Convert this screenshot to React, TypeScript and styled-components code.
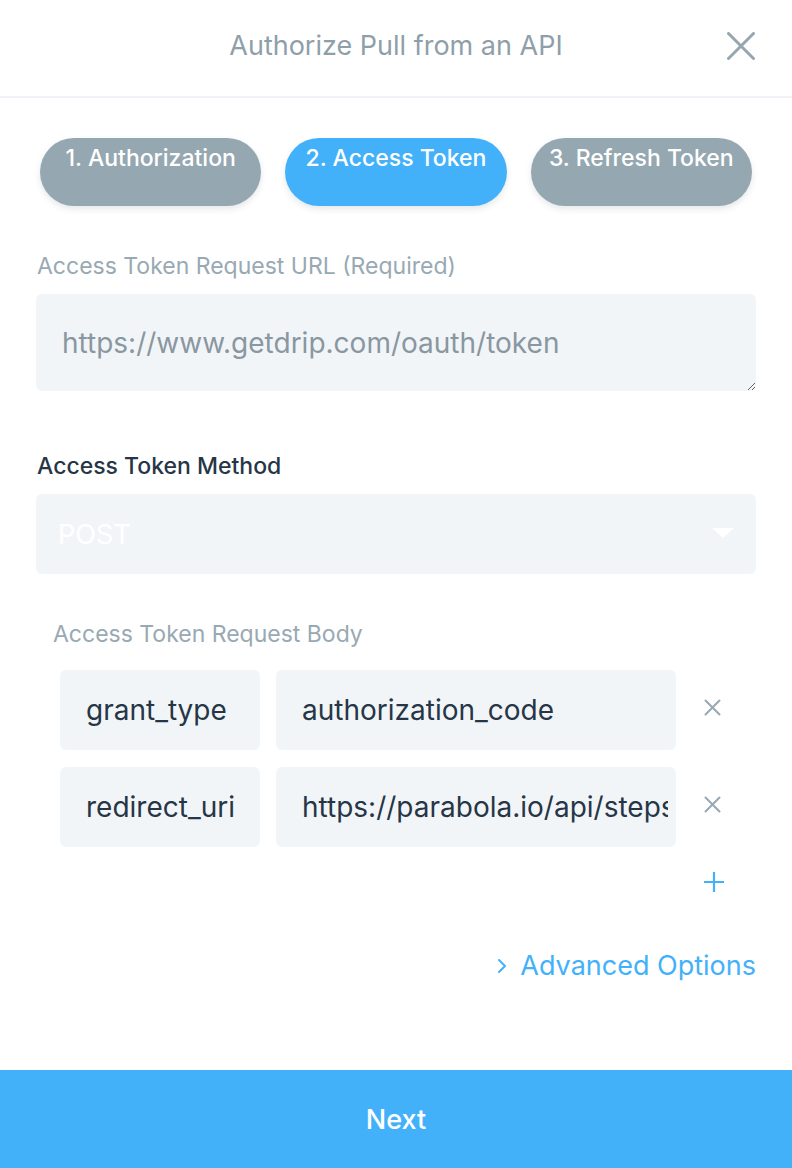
import React from "react";
import styled, { createGlobalStyle } from "styled-components";

const GlobalStyle = createGlobalStyle`
  html, body { margin: 0; padding: 0; background: #ffffff; }
  body { font-family: Inter, "Noto Sans", "Liberation Sans", sans-serif; }
  * { box-sizing: border-box; }
`;

const Page = styled.div`
  width: 792px;
  min-height: 100vh;
  display: flex;
  flex-direction: column;
  background: #fff;
`;

const Header = styled.header`
  height: 98px;
  display: grid;
  grid-template-columns: 1fr auto 1fr;
  align-items: center;
  border-bottom: 2px solid #eff3f7;
  padding: 0 36px 4px;
`;

const Title = styled.h1`
  grid-column: 2;
  margin: 0;
  font-size: 27px;
  line-height: 32px;
  font-weight: 400;
  color: #8e9faa;
`;

const CloseButton = styled.button`
  grid-column: 3;
  justify-self: end;
  border: none;
  background: none;
  padding: 0;
  width: 30px;
  height: 30px;
  display: flex;
  align-items: center;
  justify-content: center;
  cursor: pointer;
`;

const Body = styled.main`
  padding: 0 36px;
  display: flex;
  flex-direction: column;
`;

const Tabs = styled.nav`
  display: flex;
  gap: 24px;
  margin: 40px 4px 0;
`;

const Tab = styled.button<{ $active?: boolean }>`
  flex: 1;
  height: 68px;
  border: none;
  border-radius: 34px;
  background: ${(p) => (p.$active ? "#43b1fa" : "#95a7b1")};
  color: #fff;
  font-family: inherit;
  font-size: 23px;
  font-weight: 500;
  line-height: 24px;
  padding: 8px 0 0;
  display: flex;
  justify-content: center;
  align-items: flex-start;
  white-space: nowrap;
  box-shadow: 0 3px 6px rgba(40, 60, 80, 0.12);
  cursor: pointer;
`;

const Label = styled.label<{ $dark?: boolean; $indent?: number; $top: number }>`
  display: block;
  font-size: 23px;
  line-height: 24px;
  font-weight: ${(p) => (p.$dark ? 500 : 400)};
  color: ${(p) => (p.$dark ? "#263646" : "#98a9b3")};
  margin: ${(p) => p.$top}px 0 16px ${(p) => p.$indent ?? 1}px;
`;

const TextArea = styled.textarea`
  display: block;
  width: 100%;
  height: 97px;
  border: none;
  outline: none;
  border-radius: 6px;
  background: #f2f5f8;
  font-family: inherit;
  font-size: 28px;
  line-height: 36px;
  color: #8997a1;
  padding: 31px 26px 0;
  resize: vertical;
`;

const Select = styled.div`
  height: 80px;
  border-radius: 6px;
  background: #f2f5f8;
  display: flex;
  align-items: center;
  justify-content: space-between;
  padding: 0 22px;
  font-size: 27px;
  color: #ffffff;
`;

const Caret = styled.span`
  width: 0;
  height: 0;
  border-left: 11px solid transparent;
  border-right: 11px solid transparent;
  border-top: 10px solid #ffffff;
  margin-top: -3px;
`;

const Rows = styled.div`
  display: flex;
  flex-direction: column;
  gap: 17px;
  margin: 8px 0 0 24px;
`;

const Row = styled.div`
  display: grid;
  grid-template-columns: 200px 400px 72px;
  column-gap: 16px;
  align-items: center;
`;

const Cell = styled.input`
  width: 100%;
  height: 80px;
  border: none;
  outline: none;
  border-radius: 6px;
  background: #f2f5f8;
  padding: 0 8px 0 26px;
  font-family: inherit;
  font-size: 28px;
  color: #263646;
`;

const IconButton = styled.button`
  border: none;
  background: none;
  padding: 0;
  width: 24px;
  height: 24px;
  display: flex;
  align-items: center;
  justify-content: center;
  margin-left: 8px;
  margin-top: -6px;
  cursor: pointer;
`;

const AddRow = styled.div`
  display: flex;
  justify-content: flex-end;
  padding-right: 31px;
  margin-top: 24px;
`;

const Advanced = styled.a`
  align-self: flex-end;
  margin-top: 58px;
  font-size: 27px;
  line-height: 30px;
  color: #43b1fa;
  text-decoration: none;
  display: flex;
  align-items: center;
  gap: 13px;
`;

const NextButton = styled.button`
  margin-top: auto;
  height: 98px;
  width: 100%;
  border: none;
  background: #43b1fa;
  color: #fff;
  font-family: inherit;
  font-size: 27px;
  font-weight: 500;
  cursor: pointer;
`;

const X = ({ size, stroke, color }: { size: number; stroke: number; color: string }) => (
  <svg width={size} height={size} viewBox={`0 0 ${size} ${size}`} fill="none">
    <path
      d={`M1.5 1.5 L${size - 1.5} ${size - 1.5} M${size - 1.5} 1.5 L1.5 ${size - 1.5}`}
      stroke={color}
      strokeWidth={stroke}
      strokeLinecap="round"
    />
  </svg>
);

const rows = [
  { key: "grant_type", value: "authorization_code" },
  { key: "redirect_uri", value: "https://parabola.io/api/steps/oauth/callback" },
];

export default function App() {
  return (
    <Page>
      <GlobalStyle />
      <Header>
        <Title>Authorize Pull from an API</Title>
        <CloseButton aria-label="Close">
          <X size={28} stroke={3} color="#95a6b0" />
        </CloseButton>
      </Header>
      <Body>
        <Tabs>
          <Tab>1. Authorization</Tab>
          <Tab $active>2. Access Token</Tab>
          <Tab>3. Refresh Token</Tab>
        </Tabs>

        <Label $top={48}>Access Token Request URL (Required)</Label>
        <TextArea readOnly defaultValue="https://www.getdrip.com/oauth/token" />

        <Label $dark $top={63}>Access Token Method</Label>
        <Select>
          <span>POST</span>
          <Caret />
        </Select>

        <Label $top={48} $indent={17}>Access Token Request Body</Label>
        <Rows>
          {rows.map((r) => (
            <Row key={r.key}>
              <Cell readOnly defaultValue={r.key} />
              <Cell readOnly defaultValue={r.value} />
              <IconButton aria-label="Remove">
                <X size={17} stroke={2} color="#98a8b2" />
              </IconButton>
            </Row>
          ))}
        </Rows>
        <AddRow>
          <svg width="22" height="22" viewBox="0 0 22 22" fill="none">
            <path d="M11 1 V21 M1 11 H21" stroke="#43b1fa" strokeWidth="2.2" />
          </svg>
        </AddRow>

        <Advanced href="#">
          <svg width="10" height="16" viewBox="0 0 10 16" fill="none">
            <path d="M2 2 L8 8 L2 14" stroke="#43b1fa" strokeWidth="2" strokeLinecap="round" strokeLinejoin="round" />
          </svg>
          Advanced Options
        </Advanced>
      </Body>
      <NextButton>Next</NextButton>
    </Page>
  );
}
